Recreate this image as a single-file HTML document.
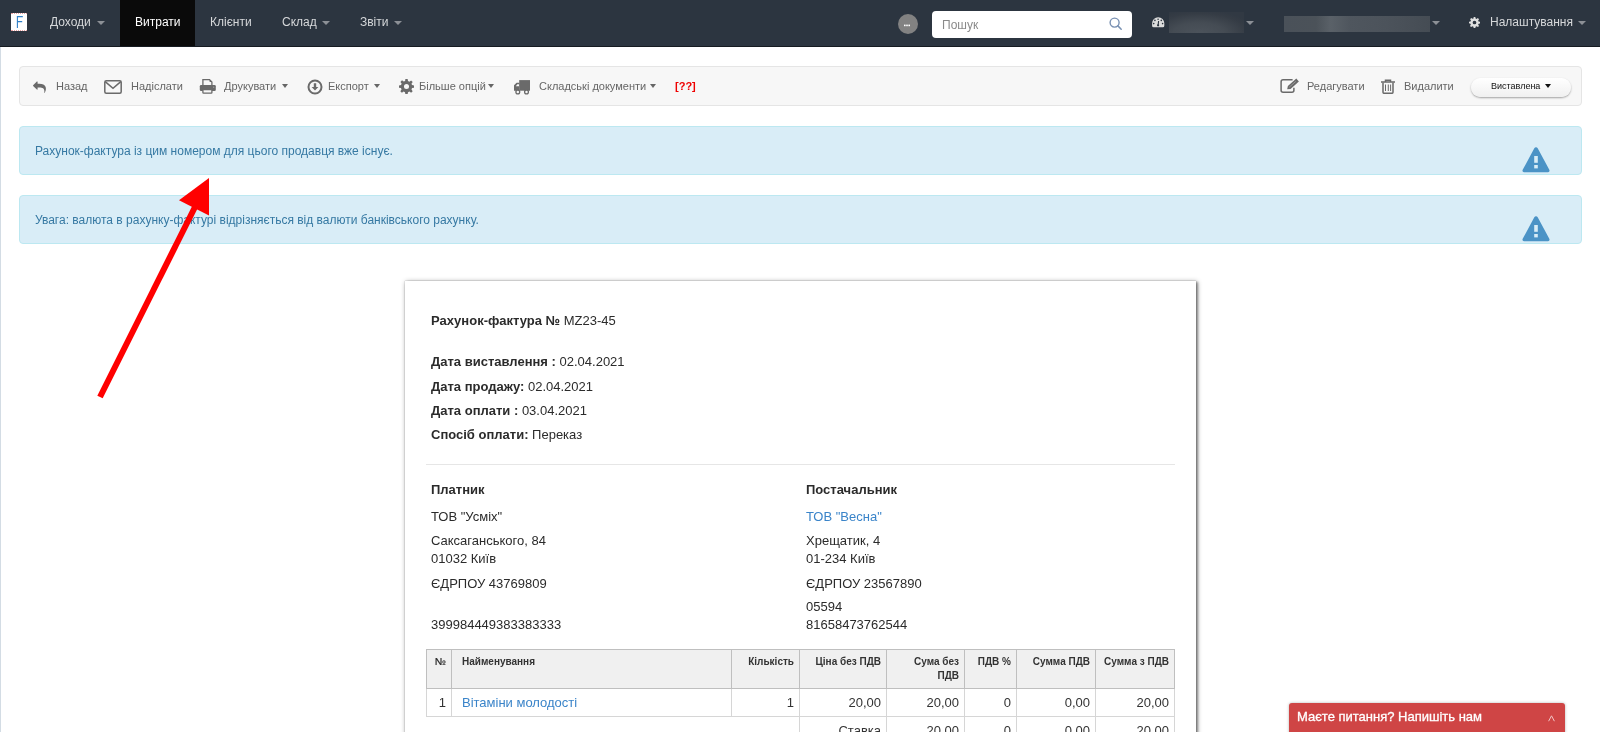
<!DOCTYPE html>
<html><head><meta charset="utf-8">
<style>
*{box-sizing:border-box;margin:0;padding:0}
html{background:#fff}body{will-change:transform;width:1600px;height:732px;overflow:hidden;background:#fff;font-family:"Liberation Sans",sans-serif;color:#333}
.a{position:absolute;white-space:nowrap}
#nav{position:absolute;left:0;top:0;width:1600px;height:47px;background:#2c3540;border-bottom:1px solid #161b21}
.nt{position:absolute;top:16px;font-size:12px;line-height:12px;color:#d6d8da;white-space:nowrap}
.car{position:absolute;width:0;height:0;border-left:4px solid transparent;border-right:4px solid transparent;border-top:4px solid #8c9096}
#leftline{position:absolute;left:0;top:47px;width:1px;height:685px;background:#d3dce4}
#toolbar{position:absolute;left:19px;top:66px;width:1563px;height:40px;background:#f7f7f7;border:1px solid #e5e5e5;border-radius:4px}
.tt{position:absolute;top:81px;font-size:11px;line-height:11px;color:#666;white-space:nowrap}
.tc{position:absolute;width:0;height:0;border-left:3.5px solid transparent;border-right:3.5px solid transparent;border-top:4px solid #666}
.ic{position:absolute}
.alert{position:absolute;left:19px;width:1563px;height:49px;background:#d9edf7;border:1px solid #bce8f1;border-radius:4px}
.alert .msg{position:absolute;left:15px;top:18px;font-size:12px;line-height:12px;color:#3679a3;white-space:nowrap}
.alert svg{position:absolute;left:1502px;top:20px}
#paper{position:absolute;left:405px;top:281px;width:791px;height:480px;background:#fff;box-shadow:0 0 1px rgba(0,0,0,.35),1px 1px 5px rgba(0,0,0,.45),2px 1px 2px rgba(0,0,0,.3)}
.d{position:absolute;font-size:13px;line-height:13px;color:#2b2b2b;white-space:nowrap}
.blue{color:#3a84c9}
table{position:absolute;left:426px;top:649px;border-collapse:collapse;font-size:13px;color:#333}
th{background:#f0f0f0;border:1px solid #bfbfbf;font-size:10px;font-weight:bold;vertical-align:top;text-align:right;line-height:14px;padding:5px 5px 0 5px;height:39px}
td{border:1px solid #d6d6d6;text-align:right;padding:0 5px;height:28px;line-height:15px}
#chat{position:absolute;left:1289px;top:703px;width:276px;height:40px;background:#cf4545;border-radius:3px;box-shadow:0 0 3px rgba(0,0,0,.3)}
</style></head><body>
<div id="nav">
  <div class="a" style="left:11px;top:13px;width:16px;height:18px;background:#fff;border-top:1px dotted #e8a0a0;border-bottom:1px dotted #e8a0a0"></div>
  <svg class="ic" style="left:11px;top:13px" width="16" height="18" viewBox="0 0 16 18"><path d="M6.4 15V3.6h5.4M6.4 8.6h4.8" fill="none" stroke="#2f7fc7" stroke-width="1.1"/></svg>
  <div class="nt" style="left:50px">Доходи</div><div class="car" style="left:97px;top:21px"></div>
  <div class="a" style="left:120px;top:0;width:75px;height:46px;background:#0a0a0a"></div>
  <div class="nt" style="left:135px;color:#fff">Витрати</div>
  <div class="nt" style="left:210px">Клієнти</div>
  <div class="nt" style="left:282px">Склад</div><div class="car" style="left:322px;top:21px"></div>
  <div class="nt" style="left:360px">Звіти</div><div class="car" style="left:394px;top:21px"></div>

  <div class="a" style="left:897.5px;top:13.7px;width:20px;height:20px;border-radius:50%;background:#828282"></div>
  <svg class="ic" style="left:903px;top:24px" width="8" height="3" viewBox="0 0 8 3"><g fill="#fff"><rect x="1" y=".6" width="1.6" height="1.6"/><rect x="3.2" y=".6" width="1.6" height="1.6"/><rect x="5.4" y=".6" width="1.6" height="1.6"/></g></svg>
  <div class="a" style="left:932px;top:11px;width:200px;height:27px;background:#fff;border-radius:4px"></div>
  <div class="a" style="left:942px;top:19px;font-size:12px;line-height:12px;color:#8a8a8a">Пошук</div>
  <svg class="ic" style="left:1109px;top:17px" width="14" height="14" viewBox="0 0 14 14"><circle cx="5.6" cy="5.6" r="4.5" fill="none" stroke="#7890b2" stroke-width="1.4"/><line x1="8.9" y1="8.9" x2="12.2" y2="12.2" stroke="#7890b2" stroke-width="1.5" stroke-linecap="round"/></svg>
  <svg class="ic" style="left:1152px;top:17px" width="13" height="11" viewBox="0 0 13 11"><path d="M6.2 0.2A6.1 6.1 0 0 0 0.1 6.3V8.8Q0.1 10.3 1.6 10.3H10.8Q12.3 10.3 12.3 8.8V6.3A6.1 6.1 0 0 0 6.2 0.2z" fill="#dcdcdc"/><g fill="#2c3540"><circle cx="1.7" cy="6.6" r=".8"/><circle cx="2.9" cy="3.4" r=".8"/><circle cx="6.1" cy="2.3" r=".8"/><circle cx="9.3" cy="3.4" r=".8"/><circle cx="10.6" cy="6.6" r=".8"/><circle cx="6.1" cy="8.3" r="1.1"/></g><line x1="6.1" y1="8.2" x2="6.6" y2="4" stroke="#2c3540" stroke-width="1.1"/></svg>
  <div class="a" style="left:1169px;top:12px;width:75px;height:21px;background:radial-gradient(ellipse 75% 110% at 40% 100%,#4c535b 0%,#454c54 45%,#353c45 85%,#313943 100%)"></div>
  <div class="car" style="left:1246px;top:21px"></div>
  <div class="a" style="left:1284px;top:16px;width:146px;height:16px;background:linear-gradient(90deg,#4a5159 0%,#4b5259 22%,#5a6168 32%,#4f565e 45%,#4c535b 70%,#454c54 100%)"></div>
  <div class="car" style="left:1432px;top:21px"></div>
  <svg class="ic" style="left:1469px;top:17px" width="11" height="11" viewBox="0 0 16 16"><path fill="#e0e0e0" d="M6.8 0h2.4l.4 2.2 1.5.6 1.8-1.3 1.7 1.7-1.3 1.8.6 1.5 2.2.4v2.4l-2.2.4-.6 1.5 1.3 1.8-1.7 1.7-1.8-1.3-1.5.6-.4 2.2H6.8l-.4-2.2-1.5-.6-1.8 1.3-1.7-1.7 1.3-1.8-.6-1.5L0 9.2V6.8l2.2-.4.6-1.5-1.3-1.8 1.7-1.7 1.8 1.3 1.5-.6zM8 5.3A2.7 2.7 0 1 0 8 10.7 2.7 2.7 0 1 0 8 5.3z"/></svg>
  <div class="nt" style="left:1490px">Налаштування</div><div class="car" style="left:1578px;top:21px"></div>
</div>
<div id="leftline"></div>

<div id="toolbar"></div>
<!-- reply -->
<svg class="ic" style="left:33px;top:81px" width="14" height="13" viewBox="0 0 14 13"><path fill="#6a6a6a" transform="scale(0.0072)" d="M1792 1120q0 166-127 451-3 7-10.5 24t-13.5 30-13 22q-12 17-28 17-15 0-23.5-10t-8.5-25q0-9 2.5-26.5t2.5-23.5q5-68 5-123 0-101-17.5-181t-48.5-138.5-80-101-105.5-69.5-133-42.5-154-21.5-175.5-6h-224v256q0 26-19 45t-45 19-45-19l-512-512q-19-19-19-45t19-45l512-512q19-19 45-19t45 19 19 45v256h224q713 0 875 403 53 134 53 333z"/></svg>
<div class="tt" style="left:56px">Назад</div>
<!-- envelope -->
<svg class="ic" style="left:104px;top:80px" width="18" height="14" viewBox="0 0 18 14"><rect x="0.8" y="0.8" width="16.4" height="12.4" rx="1.5" fill="none" stroke="#6a6a6a" stroke-width="1.5"/><path d="M1.2 1.6L9 8.2 16.8 1.6" fill="none" stroke="#6a6a6a" stroke-width="1.5"/></svg>
<div class="tt" style="left:131px">Надіслати</div>
<!-- print -->
<svg class="ic" style="left:199px;top:78px" width="17" height="16" viewBox="0 0 17 16"><path d="M3.9 7.2V1.6h6.6l2.4 2.4v3.2" fill="#f7f7f7" stroke="#6a6a6a" stroke-width="1.3"/><path d="M10.6 1.6v2.4h2.4z" fill="#6a6a6a"/><rect x="0.8" y="7" width="16" height="6" rx="1.3" fill="#6a6a6a"/><circle cx="14.7" cy="9.2" r=".6" fill="#aaa"/><rect x="3.9" y="11.6" width="9" height="3.6" rx=".6" fill="#f7f7f7" stroke="#6a6a6a" stroke-width="1.3"/></svg>
<div class="tt" style="left:224px">Друкувати</div><div class="tc" style="left:282px;top:84px"></div>
<!-- download -->
<svg class="ic" style="left:306.5px;top:78.5px" width="16" height="16" viewBox="0 0 16 16"><circle cx="8" cy="8" r="6.5" fill="none" stroke="#6a6a6a" stroke-width="2"/><path fill="#6a6a6a" d="M6.8 4.2h2.4v3.9h2.2L8 11.6 4.6 8.1h2.2z"/></svg>
<div class="tt" style="left:328px">Експорт</div><div class="tc" style="left:374px;top:84px"></div>
<!-- gear -->
<svg class="ic" style="left:398.5px;top:79px" width="15" height="15" viewBox="0 0 16 16"><path fill="#6a6a6a" d="M6.8 0h2.4l.4 2.2 1.5.6 1.8-1.3 1.7 1.7-1.3 1.8.6 1.5 2.2.4v2.4l-2.2.4-.6 1.5 1.3 1.8-1.7 1.7-1.8-1.3-1.5.6-.4 2.2H6.8l-.4-2.2-1.5-.6-1.8 1.3-1.7-1.7 1.3-1.8-.6-1.5L0 9.2V6.8l2.2-.4.6-1.5-1.3-1.8 1.7-1.7 1.8 1.3 1.5-.6zM8 5.3A2.7 2.7 0 1 0 8 10.7 2.7 2.7 0 1 0 8 5.3z"/></svg>
<div class="tt" style="left:419px">Більше опцій</div><div class="tc" style="left:488px;top:84px"></div>
<!-- truck -->
<svg class="ic" style="left:508px;top:74px" width="28" height="24" viewBox="0 0 28 24"><rect x="11.2" y="6.1" width="10.8" height="10.6" fill="#6a6a6a"/><path d="M6 16.7V11.3L8.6 8.8H11.4V16.7Z" fill="#6a6a6a"/><path d="M7.8 12.2L9.3 10.3H11V12.2Z" fill="#f7f7f7"/><circle cx="9.8" cy="17.9" r="1.9" fill="#f7f7f7" stroke="#6a6a6a" stroke-width="1.3"/><circle cx="18.5" cy="17.9" r="1.9" fill="#f7f7f7" stroke="#6a6a6a" stroke-width="1.3"/></svg>
<div class="tt" style="left:539px">Складські документи</div><div class="tc" style="left:650px;top:84px"></div>
<div class="tt" style="left:675px;color:#e00;font-weight:bold">[??]</div>

<!-- edit -->
<svg class="ic" style="left:1276px;top:74px" width="24" height="24" viewBox="0 0 24 24"><path d="M16.6 5.7H7.1A2 2 0 0 0 5.1 7.7V16.2A2 2 0 0 0 7.1 18.2H15.9A2 2 0 0 0 17.9 16.2V13.8" fill="none" stroke="#6a6a6a" stroke-width="1.5"/><path d="M11.2 15.3L11.9 12L20.3 4.6L22.9 7.6L14.5 15Z" fill="#6a6a6a"/><path d="M13.2 13.2L19.8 7.4" stroke="#aaa" stroke-width=".7"/></svg>
<div class="tt" style="left:1307px">Редагувати</div>
<!-- trash -->
<svg class="ic" style="left:1381px;top:79px" width="14" height="15" viewBox="0 0 14 15"><path d="M0 3H14M4.5 3V1.2h5V3" fill="none" stroke="#6a6a6a" stroke-width="1.5"/><path d="M2 3.5V13.2A1.2 1.2 0 0 0 3.2 14.3H10.8A1.2 1.2 0 0 0 12 13.2V3.5" fill="none" stroke="#6a6a6a" stroke-width="1.5"/><path d="M4.5 5.5v6.5M7.3 5.5v6.5M9.6 5.5v6.5" stroke="#6a6a6a" stroke-width="1"/></svg>
<div class="tt" style="left:1404px">Видалити</div>
<!-- status button -->
<div class="a" style="left:1471px;top:78px;width:100px;height:19px;border-radius:9.5px;background:linear-gradient(#fff,#f0f0f0);box-shadow:0 1px 2px rgba(0,0,0,.35)"></div>
<div class="a" style="left:1491px;top:82px;font-size:9px;line-height:9px;color:#111">Виставлена</div>
<div class="a" style="left:1545px;top:84px;width:0;height:0;border-left:3.5px solid transparent;border-right:3.5px solid transparent;border-top:4px solid #111"></div>

<div class="alert" style="top:126px"><div class="msg">Рахунок-фактура із цим номером для цього продавця вже існує.</div>
<svg width="28" height="26" viewBox="0 0 28 26"><path fill="#4b93c6" d="M12.3 1.2a2 2 0 0 1 3.4 0l11.6 21.6a1.6 1.6 0 0 1-1.4 2.4H2.1a1.6 1.6 0 0 1-1.4-2.4z"/><rect x="12.2" y="9" width="3.6" height="6.8" fill="#d9edf7"/><rect x="12.2" y="18" width="3.6" height="3.4" fill="#d9edf7"/></svg></div>
<div class="alert" style="top:195px"><div class="msg">Увага: валюта в рахунку-фактурі відрізняється від валюти банківського рахунку.</div>
<svg width="28" height="26" viewBox="0 0 28 26"><path fill="#4b93c6" d="M12.3 1.2a2 2 0 0 1 3.4 0l11.6 21.6a1.6 1.6 0 0 1-1.4 2.4H2.1a1.6 1.6 0 0 1-1.4-2.4z"/><rect x="12.2" y="9" width="3.6" height="6.8" fill="#d9edf7"/><rect x="12.2" y="18" width="3.6" height="3.4" fill="#d9edf7"/></svg></div>

<div id="paper"></div>
<div class="d" style="left:431px;top:314px"><b>Рахунок-фактура №</b> MZ23-45</div>
<div class="d" style="left:431px;top:355px"><b>Дата виставлення :</b> 02.04.2021</div>
<div class="d" style="left:431px;top:380px"><b>Дата продажу:</b> 02.04.2021</div>
<div class="d" style="left:431px;top:404px"><b>Дата оплати :</b> 03.04.2021</div>
<div class="d" style="left:431px;top:428px"><b>Спосіб оплати:</b> Переказ</div>
<div class="a" style="left:426px;top:464px;width:749px;height:1px;background:#e6e6e6"></div>
<div class="d" style="left:431px;top:483px;font-weight:bold">Платник</div>
<div class="d" style="left:431px;top:510px">ТОВ "Усміх"</div>
<div class="d" style="left:431px;top:534px">Саксаганського, 84</div>
<div class="d" style="left:431px;top:552px">01032 Київ</div>
<div class="d" style="left:431px;top:577px">ЄДРПОУ 43769809</div>
<div class="d" style="left:431px;top:618px">399984449383383333</div>
<div class="d" style="left:806px;top:483px;font-weight:bold">Постачальник</div>
<div class="d blue" style="left:806px;top:510px">ТОВ "Весна"</div>
<div class="d" style="left:806px;top:534px">Хрещатик, 4</div>
<div class="d" style="left:806px;top:552px">01-234 Київ</div>
<div class="d" style="left:806px;top:577px">ЄДРПОУ 23567890</div>
<div class="d" style="left:806px;top:600px">05594</div>
<div class="d" style="left:806px;top:618px">81658473762544</div>

<table>
<tr><th style="width:25px">№</th><th style="width:280px;text-align:left;padding-left:10px">Найменування</th><th style="width:68px">Кількість</th><th style="width:87px">Ціна без ПДВ</th><th style="width:78px">Сума без ПДВ</th><th style="width:52px">ПДВ %</th><th style="width:79px">Сумма ПДВ</th><th style="width:79px">Сумма з ПДВ</th></tr>
<tr><td>1</td><td style="text-align:left;padding-left:10px" class="blue">Вітаміни молодості</td><td>1</td><td>20,00</td><td>20,00</td><td>0</td><td>0,00</td><td>20,00</td></tr>
<tr><td style="border:none"></td><td style="border:none"></td><td style="border:none;border-right:1px solid #d6d6d6"></td><td>Ставка</td><td>20,00</td><td>0</td><td>0,00</td><td>20,00</td></tr>
</table>

<!-- arrow -->
<svg class="a" style="left:0;top:0" width="1600" height="732" viewBox="0 0 1600 732"><line x1="100" y1="397" x2="196" y2="205" stroke="#ff0000" stroke-width="6"/><path d="M209 178L179 200.2 209 215.5Z" fill="#ff0000"/></svg>

<div id="chat"><div class="a" style="left:8px;top:7px;font-size:13px;line-height:13px;color:#fff;-webkit-text-stroke:.3px #fff">Маєте питання? Напишіть нам</div>
<svg class="a" style="left:259px;top:12px" width="7" height="7" viewBox="0 0 7 7"><path d="M0.6 6.2L3.5 0.8 6.4 6.2" fill="none" stroke="#f0c4c4" stroke-width="1"/></svg></div>
</body></html>
